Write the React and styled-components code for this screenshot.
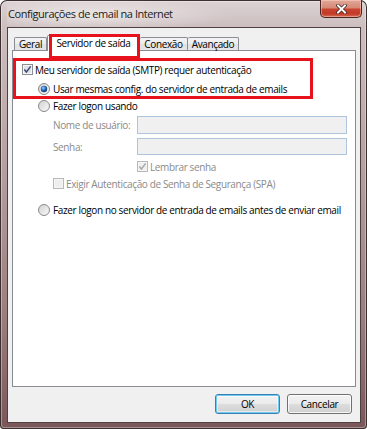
import styled, { createGlobalStyle } from "styled-components";

const Global = createGlobalStyle`
  html, body {
    margin: 0;
    padding: 0;
    background: #ffffff;
  }
  body {
    font-family: "Open Sans", "Noto Sans", sans-serif;
    font-size: 10px;
    letter-spacing: -0.37px;
    color: #000;
  }
`;

const Window = styled.div`
  width: 367px;
  height: 429px;
  box-sizing: border-box;
  padding: 0 6px 6px 7px;
  display: flex;
  flex-direction: column;
  border-radius: 7px 7px 4px 4px;
  background: linear-gradient(
    180deg,
    #dcd3d3 0%,
    #cdbfc0 6%,
    #b8a3a4 35%,
    #9a7c7e 75%,
    #7a5759 100%
  );
  box-shadow: inset 0 0 0 1px #3c2f30, inset 0 0 0 2px rgba(255, 255, 255, 0.35);
  overflow: hidden;
`;

const TitleBar = styled.div`
  height: 27px;
  flex: none;
  display: flex;
  align-items: flex-start;
  justify-content: space-between;
  background: radial-gradient(
    ellipse 140px 16px at 85px 15px,
    rgba(255, 255, 255, 0.55),
    rgba(255, 255, 255, 0) 100%
  );
`;

const Title = styled.span`
  margin: 7px 0 0 1px;
  font-size: 11px;
  letter-spacing: -0.45px;
  line-height: 14px;
  color: #1b1b1b;
`;

const CloseBtn = styled.div`
  width: 42px;
  height: 18px;
  margin: 0 -1px 0 0;
  box-sizing: border-box;
  border: 1px solid #4a2420;
  border-top: none;
  border-radius: 0 0 5px 5px;
  background: linear-gradient(
    180deg,
    #e2a899 0%,
    #d68a78 45%,
    #c9432f 55%,
    #c23a28 80%,
    #d76a4f 100%
  );
  box-shadow: inset 0 0 0 1px rgba(255, 220, 210, 0.45);
  display: flex;
  align-items: center;
  justify-content: center;
`;

const Client = styled.div`
  flex: 1;
  display: flex;
  flex-direction: column;
  background: #f0f0f0;
  border: 1px solid #4e4041;
  padding: 7px 4px 8px 4px;
  min-height: 0;
`;

const TabStrip = styled.div`
  height: 15px;
  flex: none;
  display: flex;
  align-items: flex-end;
  padding-left: 2px;
`;

const Tab = styled.div`
  position: relative;
  z-index: 2;
  box-sizing: border-box;
  width: ${(p) => p.w}px;
  height: ${(p) => (p.active ? 16 : 13)}px;
  margin-bottom: ${(p) => (p.active ? -1 : 0)}px;
  border: 1px solid #898c95;
  border-bottom: none;
  border-left-width: ${(p) => (p.first || p.active ? 1 : 0)}px;
  border-radius: 2px 2px 0 0;
  background: ${(p) =>
    p.active
      ? "#ffffff"
      : "linear-gradient(180deg, #f4f4f4 0%, #ececec 50%, #e1e1e1 51%, #e6e6e6 100%)"};
  text-align: center;
  line-height: ${(p) => (p.active ? 14 : 12)}px;
  white-space: nowrap;
`;

const TabMark = styled.span`
  position: absolute;
  left: 1px;
  right: -1px;
  top: -2px;
  bottom: -8px;
  border: 3px solid #e8121c;
  pointer-events: none;
`;

const Panel = styled.div`
  flex: 1;
  display: flex;
  flex-direction: column;
  background: #ffffff;
  border: 1px solid #898c95;
  padding-top: 10px;
`;

const Group = styled.div`
  position: relative;
`;

const GroupMark = styled.span`
  position: absolute;
  left: 0;
  top: -3px;
  width: 300px;
  height: 41px;
  box-sizing: border-box;
  border: 3px solid #e8121c;
  pointer-events: none;
`;

const Row = styled.div`
  display: flex;
  align-items: center;
  height: 17px;
  padding-left: ${(p) => p.indent}px;
  margin-top: ${(p) => p.mt || 0}px;
  gap: ${(p) => p.gap || 3}px;
  color: ${(p) => (p.disabled ? "#8a8a8a" : "#000")};
  white-space: nowrap;
`;

const FieldRow = styled.div`
  display: flex;
  align-items: center;
  padding-left: 40px;
  margin-top: ${(p) => p.mt}px;
`;

const FieldLabel = styled.span`
  width: 84px;
  color: #8a8a8a;
`;

const Input = styled.div`
  width: 210px;
  height: ${(p) => p.h}px;
  box-sizing: border-box;
  border: 1px solid #aec3dc;
  background: #f0f0f0;
`;

const ButtonBar = styled.div`
  flex: none;
  display: flex;
  justify-content: flex-end;
  gap: 7px;
  margin-top: 7px;
  padding-right: 4px;
`;

const Button = styled.div`
  width: 65px;
  height: 20px;
  box-sizing: border-box;
  border: 1px solid ${(p) => (p.primary ? "#3c7fb1" : "#707070")};
  border-radius: 3px;
  background: linear-gradient(180deg, #f3f3f3 0%, #ebebeb 48%, #dddddd 52%, #d0d0d0 100%);
  box-shadow: ${(p) =>
    p.primary
      ? "inset 0 0 0 1px #6fcaf0, inset 0 0 0 2px rgba(255,255,255,0.5)"
      : "inset 0 0 0 1px rgba(255,255,255,0.8)"};
  display: flex;
  align-items: center;
  justify-content: center;
  font-size: 10px;
`;

const CheckBox = ({ checked, disabled }) => (
  <svg width="11" height="11" viewBox="0 0 11 11" style={{ flex: "none" }}>
    <rect x="0.5" y="0.5" width="10" height="10" fill="#f6f6f6" stroke={disabled ? "#b8b8b8" : "#8e8f8f"} />
    <rect x="2" y="2" width="7" height="7" fill={disabled ? "#eeeeee" : "#dfe1e4"} />
    {checked && (
      <path
        d="M2.3 5.6 L4.4 8 L8.7 2.4"
        fill="none"
        stroke={disabled ? "#a9a9a9" : "#3b4c78"}
        strokeWidth="1.5"
      />
    )}
  </svg>
);

const Radio = ({ checked }) => (
  <svg width="12" height="12" viewBox="0 0 12 12" style={{ flex: "none" }}>
    <defs>
      <radialGradient id="rdot" cx="0.4" cy="0.35" r="0.7">
        <stop offset="0" stopColor="#a9dcff" />
        <stop offset="0.45" stopColor="#2d6fc0" />
        <stop offset="1" stopColor="#0b2f66" />
      </radialGradient>
      <linearGradient id="rbg" x1="0" y1="0" x2="1" y2="1">
        <stop offset="0" stopColor="#d0d0d0" />
        <stop offset="1" stopColor="#fbfbfb" />
      </linearGradient>
    </defs>
    <circle cx="6" cy="6" r="5.5" fill="url(#rbg)" stroke="#8a8a8a" />
    {checked && <circle cx="6" cy="6" r="3.2" fill="url(#rdot)" />}
  </svg>
);

const App = () => {
  return (
    <>
      <Global />
      <Window>
        <TitleBar>
          <Title>Configurações de email na Internet</Title>
          <CloseBtn>
            <svg width="11" height="10" viewBox="0 0 11 10">
              <path d="M2 1.5 L9 8.5 M9 1.5 L2 8.5" stroke="#3a1a16" strokeWidth="3.4" strokeLinecap="square" />
              <path d="M2 1.5 L9 8.5 M9 1.5 L2 8.5" stroke="#ffffff" strokeWidth="2" strokeLinecap="square" />
            </svg>
          </CloseBtn>
        </TitleBar>
        <Client>
          <TabStrip>
            <Tab w={33} first>
              Geral
            </Tab>
            <Tab w={93} active>
              Servidor de saída
              <TabMark />
            </Tab>
            <Tab w={48}>Conexão</Tab>
            <Tab w={51}>Avançado</Tab>
          </TabStrip>
          <Panel>
            <Group>
              <Row indent={9} gap={2}>
                <CheckBox checked />
                Meu servidor de saída (SMTP) requer autenticação
              </Row>
              <Row indent={25} mt={2}>
                <Radio checked />
                Usar mesmas config. do servidor de entrada de emails
              </Row>
              <GroupMark />
            </Group>
            <Row indent={25}>
              <Radio />
              Fazer logon usando
            </Row>
            <FieldRow mt={2}>
              <FieldLabel>Nome de usuário:</FieldLabel>
              <Input h={18} />
            </FieldRow>
            <FieldRow mt={4}>
              <FieldLabel>Senha:</FieldLabel>
              <Input h={17} />
            </FieldRow>
            <Row indent={124} mt={3} gap={2} disabled>
              <CheckBox checked disabled />
              Lembrar senha
            </Row>
            <Row indent={40} gap={2} disabled>
              <CheckBox disabled />
              Exigir Autenticação de Senha de Segurança (SPA)
            </Row>
            <Row indent={25} mt={9}>
              <Radio />
              Fazer logon no servidor de entrada de emails antes de enviar email
            </Row>
          </Panel>
          <ButtonBar>
            <Button primary>OK</Button>
            <Button>Cancelar</Button>
          </ButtonBar>
        </Client>
      </Window>
    </>
  );
};

export default App;
